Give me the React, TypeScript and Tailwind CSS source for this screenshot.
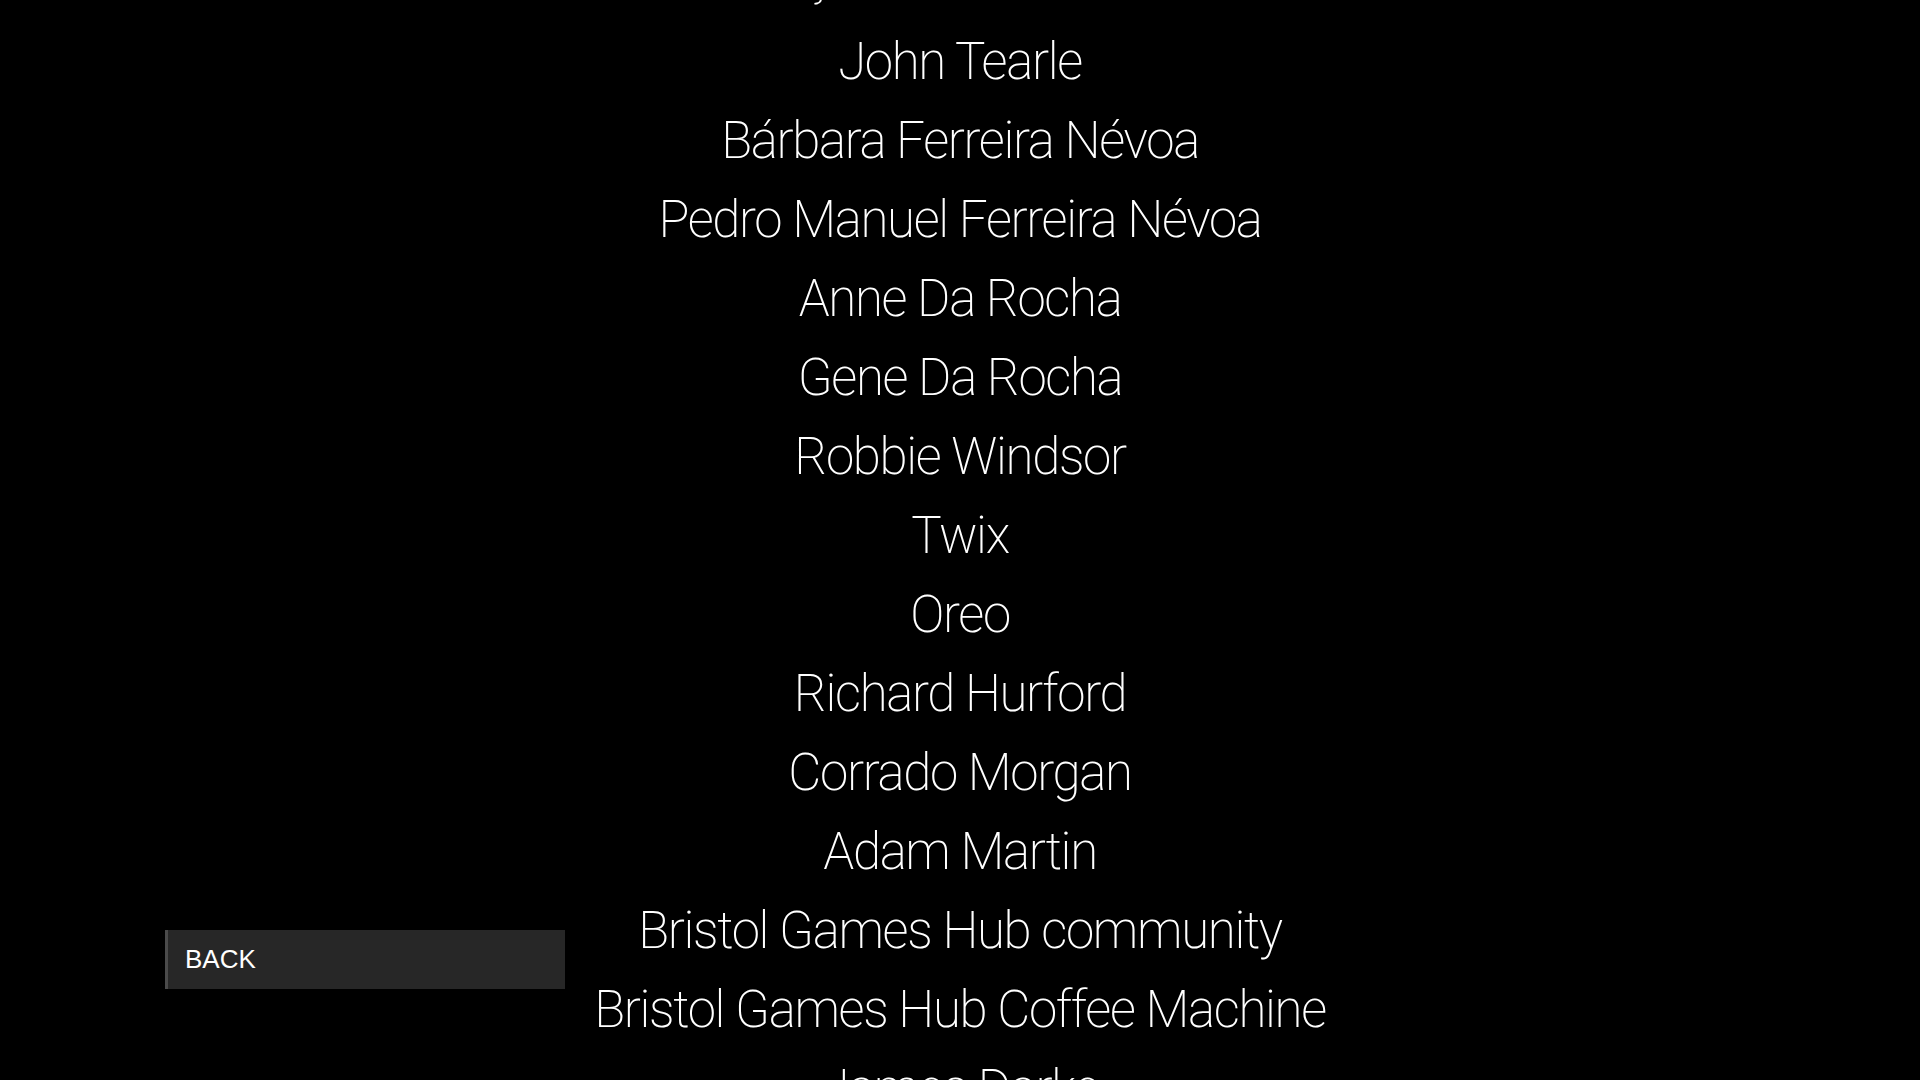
const credits = [
  "Gonçalo Ferreira Névoa",
  "John Tearle",
  "Bárbara Ferreira Névoa",
  "Pedro Manuel Ferreira Névoa",
  "Anne Da Rocha",
  "Gene Da Rocha",
  "Robbie Windsor",
  "Twix",
  "Oreo",
  "Richard Hurford",
  "Corrado Morgan",
  "Adam Martin",
  "Bristol Games Hub community",
  "Bristol Games Hub Coffee Machine",
  "James Darke",
];

export default function App() {
  return (
    <div className="relative h-screen w-full overflow-hidden bg-black">
      {/* scrolling credits */}
      <div className="-mt-[57px] flex flex-col items-center">
        {credits.map((name) => (
          <div
            key={name}
            className="whitespace-nowrap font-['Roboto',sans-serif] text-[51px] font-extralight leading-[79px] tracking-[-1.35px] text-white first:-translate-y-[7px]"
          >
            {name}
          </div>
        ))}
      </div>

      <button className="absolute left-[165px] top-[930px] flex h-[59px] w-[400px] items-center border-l-[3px] border-[#4a4a4a] bg-[#272727] pl-[17px] font-['Liberation_Sans',Arial,sans-serif] text-[26px] text-white">
        BACK
      </button>
    </div>
  );
}
